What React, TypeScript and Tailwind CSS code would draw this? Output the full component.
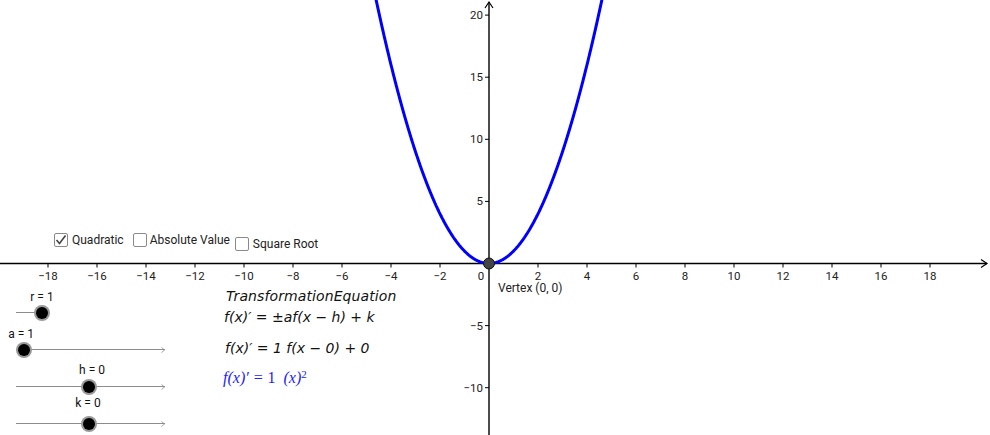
import React from "react";

const OX = 489;
const OY = 263.5;
const SX = 24.5;
const SY = 12.42;

function px(x: number) {
  return OX + x * SX;
}
function py(y: number) {
  return OY - y * SY;
}

function parabola() {
  const pts: string[] = [];
  for (let i = -500; i <= 500; i++) {
    const x = i / 100;
    pts.push(`${px(x).toFixed(2)},${py(x * x).toFixed(2)}`);
  }
  return "M" + pts.join(" L");
}

function Graph() {
  const xt: number[] = [];
  for (let v = -18; v <= 18; v += 2) if (v !== 0) xt.push(v);
  const yt = [-10, -5, 5, 10, 15, 20];
  const fmt = (v: number) => (v < 0 ? "\u2212" + Math.abs(v) : String(v));
  return (
    <svg width={990} height={435} className="absolute left-0 top-0 font-[Roboto,sans-serif]">
      <line x1={0} y1={OY} x2={987} y2={OY} stroke="#000" strokeWidth={1.4} />
      <path d={`M981,${OY - 4} L987,${OY} L981,${OY + 4}`} fill="none" stroke="#000" strokeWidth={1.2} />
      <line x1={OX} y1={435} x2={OX} y2={2} stroke="#000" strokeWidth={1.4} />
      <path d={`M${OX - 4},8 L${OX},2 L${OX + 4},8`} fill="none" stroke="#000" strokeWidth={1.2} />
      {xt.map((v) => (
        <g key={v}>
          <line x1={px(v)} y1={OY} x2={px(v)} y2={OY + 4} stroke="#000" strokeWidth={1} />
          <text x={px(v)} y={OY + 16} fontSize={11.5} textAnchor="middle" fill="#222">
            {fmt(v)}
          </text>
        </g>
      ))}
      <text x={481} y={OY + 16} fontSize={11.5} textAnchor="middle" fill="#222">
        0
      </text>
      {yt.map((v) => (
        <g key={v}>
          <line x1={OX - 4} y1={py(v)} x2={OX} y2={py(v)} stroke="#000" strokeWidth={1} />
          <text x={OX - 6} y={py(v) + 4} fontSize={11.5} textAnchor="end" fill="#222">
            {fmt(v)}
          </text>
        </g>
      ))}
      <path d={parabola()} fill="none" stroke="#0000ff" strokeWidth={3} strokeLinejoin="round" />
      <circle cx={OX} cy={OY} r={5.5} fill="#444" stroke="#111" strokeWidth={1} />
      <text x={498} y={292} fontSize={12} fill="#222">
        Vertex (0, 0)
      </text>
    </svg>
  );
}

function Check({ checked }: { checked?: boolean }) {
  return (
    <div className="relative w-[14px] h-[14px] shrink-0 rounded-[2px] border border-[#8a8a8a] bg-white">
      {checked && (
        <svg width={14} height={14} viewBox="0 0 14 14" className="absolute -left-[1px] -top-[1px]">
          <path d="M2.5,7 L5.5,10.5 L11.5,2.5" fill="none" stroke="#444" strokeWidth={1.6} />
        </svg>
      )}
    </div>
  );
}

type SliderData = { label: string; frac: number; labelDx: number; labelClass: string; lineClass: string; arrow: boolean };

const sliders: SliderData[] = [
  { label: "r = 1", frac: 1, labelDx: 0, labelClass: "top-[1px]", lineClass: "w-[30px]", arrow: false },
  { label: "a = 1", frac: 0.054, labelDx: -3, labelClass: "top-[1px]", lineClass: "w-[149px]", arrow: true },
  { label: "h = 0", frac: 0.49, labelDx: 3, labelClass: "top-[0px]", lineClass: "w-[149px]", arrow: true },
  { label: "k = 0", frac: 0.49, labelDx: -1, labelClass: "-top-[4px]", lineClass: "w-[149px]", arrow: true },
];

function Slider({ s }: { s: SliderData }) {
  const knobX = s.lineClass === "w-[30px]" ? 26 * s.frac : 149 * s.frac;
  return (
    <div className="relative h-[37px] w-[160px]">
      <div className={`absolute left-0 top-[22px] h-px bg-[#8c8c8c] ${s.lineClass}`} />
      {s.arrow && (
        <svg width={6} height={6} className="absolute left-[145px] top-[19.5px]">
          <path d="M0.5,0.5 L3.5,3 L0.5,5.5" fill="none" stroke="#8c8c8c" strokeWidth={0.8} />
        </svg>
      )}
      <div
        className="absolute top-[14.5px] w-[16px] h-[16px] rounded-full bg-[#999] flex items-center justify-center"
        style={{ left: knobX - 8 }}
      >
        <div className="w-[12px] h-[12px] rounded-full bg-black" />
      </div>
      <div
        className={`absolute text-[12px] leading-none text-[#111] whitespace-nowrap -translate-x-1/2 ${s.labelClass}`}
        style={{ left: knobX + s.labelDx }}
      >
        {s.label}
      </div>
    </div>
  );
}

export default function App() {
  return (
    <div className="relative w-[990px] h-[435px] bg-white overflow-hidden font-[Roboto,sans-serif]">
      <Graph />

      {/* checkboxes */}
      <div className="absolute left-[54px] top-[233px] flex items-start text-[12px] leading-[14px] text-[#222]">
        <div className="flex items-center gap-[4px]">
          <Check checked />
          <span>Quadratic</span>
        </div>
        <div className="ml-[9px] flex items-center gap-[3px]">
          <Check />
          <span>Absolute Value</span>
        </div>
        <div className="ml-[5px] mt-[4px] flex items-center gap-[4px]">
          <Check />
          <span className="-mt-[1px]">Square Root</span>
        </div>
      </div>

      {/* sliders */}
      <div className="absolute left-[16px] top-[290px] flex flex-col">
        {sliders.map((s) => (
          <Slider key={s.label} s={s} />
        ))}
      </div>

      {/* equations */}
      <div className="absolute left-[223px] top-[289px] flex flex-col whitespace-nowrap text-[#111] font-['DejaVu_Sans',sans-serif] italic text-[14px] leading-none">
        <div className="ml-[3px] tracking-[0.1px]">TransformationEquation</div>
        <div className="mt-[7px] ml-[1px]">f(x)′ = ±af(x − h) + k</div>
        <div className="mt-[17px] ml-[2px]">f(x)′ = 1 f(x − 0) + 0</div>
        <div className="mt-[15px] text-[16px] text-[#2222ff] font-['Liberation_Serif',serif]">
          f(x)′ = <span className="not-italic">1</span>&nbsp; (x)<sup className="text-[11px] not-italic">2</sup>
        </div>
      </div>
    </div>
  );
}
